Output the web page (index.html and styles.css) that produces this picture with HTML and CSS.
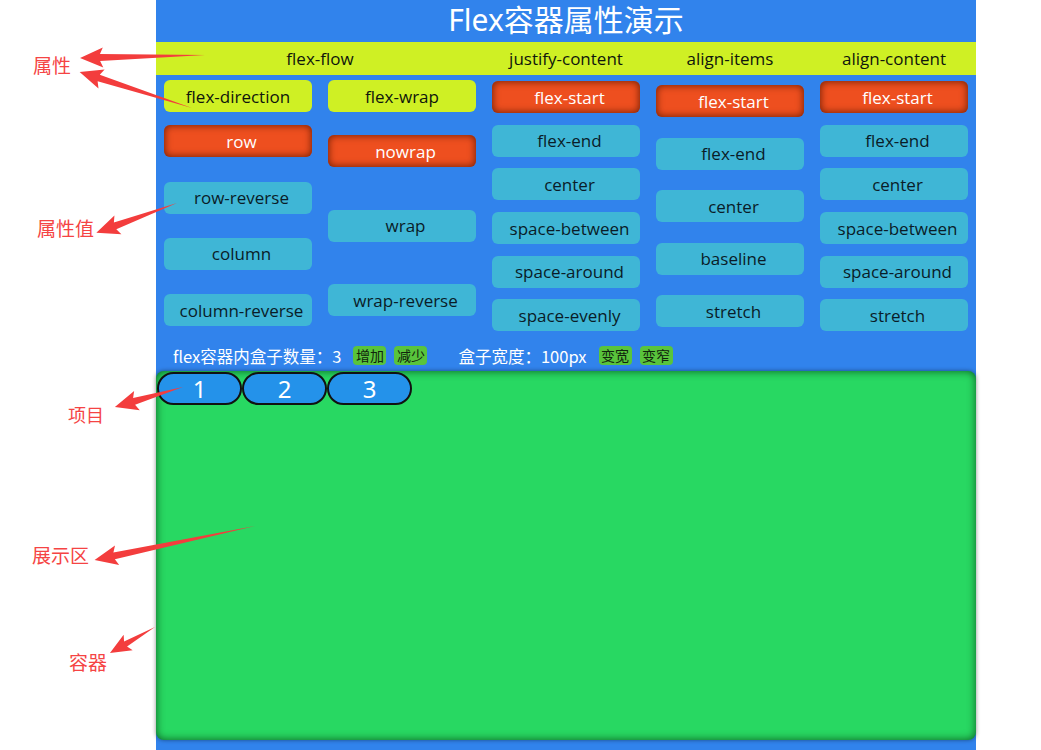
FILE: index.html
```html
<!DOCTYPE html>
<html lang="zh-CN">
<head>
<meta charset="utf-8">
<title>Flex容器属性演示</title>
<link rel="stylesheet" href="styles.css">
</head>
<body>
<div class="app">
  <h1 class="title">Flex容器属性演示</h1>
  <div class="props">
    <div class="prop prop-wide">flex-flow</div>
    <div class="prop">justify-content</div>
    <div class="prop">align-items</div>
    <div class="prop">align-content</div>
  </div>
  <div class="options">
    <div class="col col-dir">
      <div class="btn btn-head">flex-direction</div>
      <div class="btn btn-on">row</div>
      <div class="btn">row-reverse</div>
      <div class="btn">column</div>
      <div class="btn">column-reverse</div>
    </div>
    <div class="col col-wrap">
      <div class="btn btn-head">flex-wrap</div>
      <div class="btn btn-on">nowrap</div>
      <div class="btn">wrap</div>
      <div class="btn">wrap-reverse</div>
    </div>
    <div class="col col-jc">
      <div class="btn btn-on">flex-start</div>
      <div class="btn">flex-end</div>
      <div class="btn">center</div>
      <div class="btn">space-between</div>
      <div class="btn">space-around</div>
      <div class="btn">space-evenly</div>
    </div>
    <div class="col col-ai">
      <div class="btn btn-on">flex-start</div>
      <div class="btn">flex-end</div>
      <div class="btn">center</div>
      <div class="btn">baseline</div>
      <div class="btn">stretch</div>
    </div>
    <div class="col col-ac">
      <div class="btn btn-on">flex-start</div>
      <div class="btn">flex-end</div>
      <div class="btn">center</div>
      <div class="btn">space-between</div>
      <div class="btn">space-around</div>
      <div class="btn">stretch</div>
    </div>
  </div>
  <div class="controls">
    <span class="ctl-text">flex容器内盒子数量：3</span>
    <span class="mini mini-first">增加</span>
    <span class="mini">减少</span>
    <span class="ctl-text ctl-gap">盒子宽度：100px</span>
    <span class="mini mini-first">变宽</span>
    <span class="mini">变窄</span>
  </div>
  <div class="stage">
    <div class="item">1</div>
    <div class="item">2</div>
    <div class="item">3</div>
  </div>
</div>

<div class="notes">
  <svg class="arrows" width="1041" height="750" viewBox="0 0 1041 750">
    <g fill="#f33d3d">
      <polygon transform="translate(205 55) rotate(178.6)" points="0,0 105,-3.5 102,-10 125,0 102,10 105,3.5"/>
      <polygon transform="translate(192 108) rotate(-162.2)" points="0,0 98,-3.5 95,-10 118,0 95,10 98,3.5"/>
      <polygon transform="translate(177 203) rotate(159.7)" points="0,0 66,-3.5 63,-10 86,0 63,10 66,3.5"/>
      <polygon transform="translate(183 387) rotate(163.6)" points="0,0 51,-3.5 48,-10 71,0 48,10 51,3.5"/>
      <polygon transform="translate(255 526) rotate(168)" points="0,0 144,-3.5 141,-10 164,0 141,10 144,3.5"/>
      <polygon transform="translate(155 627) rotate(150)" points="0,0 34,-3 31,-9 52,0 31,9 34,3"/>
    </g>
  </svg>
  <span class="note note-prop">属性</span>
  <span class="note note-val">属性值</span>
  <span class="note note-item">项目</span>
  <span class="note note-stage">展示区</span>
  <span class="note note-box">容器</span>
</div>
</body>
</html>
```

FILE: styles.css
```css
* { box-sizing: border-box; }
html, body { margin: 0; padding: 0; background: #fff; }
body {
  font-family: "Open Sans", "Noto Sans CJK SC", sans-serif;
  width: 1041px;
  height: 750px;
  overflow: hidden;
  position: relative;
}
.app {
  width: 820px;
  margin-left: 156px;
  background: #3183ec;
  padding-bottom: 10px;
}
.title {
  margin: 0;
  height: 42px;
  line-height: 40px;
  font-size: 30px;
  font-weight: normal;
  color: #fff;
  text-align: center;
  font-family: "Noto Sans", "Noto Sans CJK SC", sans-serif;
}
.props {
  display: grid;
  grid-template-columns: repeat(5, 164px);
  height: 33px;
  background: #cff024;
  align-items: center;
}
.prop {
  text-align: center;
  font-size: 17px;
  color: #10160c;
}
.prop-wide { grid-column: span 2; }
.options {
  display: grid;
  grid-template-columns: repeat(5, 164px);
  height: 265px;
}
.col {
  display: flex;
  flex-direction: column;
  padding: 5px 8px 0;
}
.btn {
  height: 32px;
  border-radius: 6px;
  background: #3fb6d6;
  color: #0a1c28;
  font-size: 17px;
  display: flex;
  align-items: center;
  justify-content: center;
  flex-shrink: 0;
  padding-left: 7px;
}
.btn-head { background: #cff024; color: #10160c; padding-left: 0; }
.btn-on {
  background: #ee4f1f;
  color: #fff;
  box-shadow: inset 0 0 7px 1px rgba(95, 25, 0, 0.8);
}
.col-dir { gap: 24.3px; }
.col-dir .btn-head { margin-bottom: -11px; }
.col-wrap { gap: 42.5px; }
.col-wrap .btn-head { margin-bottom: -19.5px; }
.col-jc, .col-ac { gap: 11.7px; padding-top: 6px; }
.col-ai { gap: 20.5px; padding-top: 10px; }
.controls {
  height: 31px;
  display: flex;
  align-items: center;
  padding-left: 17px;
  color: #fff;
  font-size: 16.5px;
}
.ctl-text { font-family: "Noto Sans CJK SC", sans-serif; }
.ctl-gap { margin-left: 31px; }
.mini {
  width: 33px;
  height: 19px;
  border-radius: 4px;
  background: #59c43c;
  color: #10240c;
  font-size: 14px;
  line-height: 19px;
  text-align: center;
  margin-left: 8px;
  font-family: "Noto Sans CJK SC", sans-serif;
}
.mini-first { margin-left: 12px; }
.stage {
  height: 369px;
  background: #28d862;
  border-radius: 8px;
  box-shadow: 0 0 4px rgba(0, 0, 0, 0.45), inset 0 0 8px rgba(0, 50, 10, 0.75);
  display: flex;
  align-items: flex-start;
  padding: 1px 1px;
}
.item {
  width: 85px;
  height: 33px;
  border: 2px solid #111;
  border-radius: 17px;
  background: #2492ea;
  color: #fff;
  font-size: 24px;
  display: flex;
  align-items: center;
  justify-content: center;
  font-family: "Noto Sans", sans-serif;
}
.notes {
  position: absolute;
  left: 0;
  top: 0;
  width: 1041px;
  height: 750px;
  pointer-events: none;
}
.arrows { position: absolute; left: 0; top: 0; }
.note {
  position: absolute;
  font-family: "Noto Sans CJK SC", sans-serif;
  font-size: 19px;
  line-height: 19px;
  color: #f54444;
}
.note-prop { left: 33px; top: 55px; }
.note-val { left: 37px; top: 218px; }
.note-item { left: 68px; top: 405px; font-size: 18px; }
.note-stage { left: 32px; top: 545px; }
.note-box { left: 69px; top: 652px; }
```
